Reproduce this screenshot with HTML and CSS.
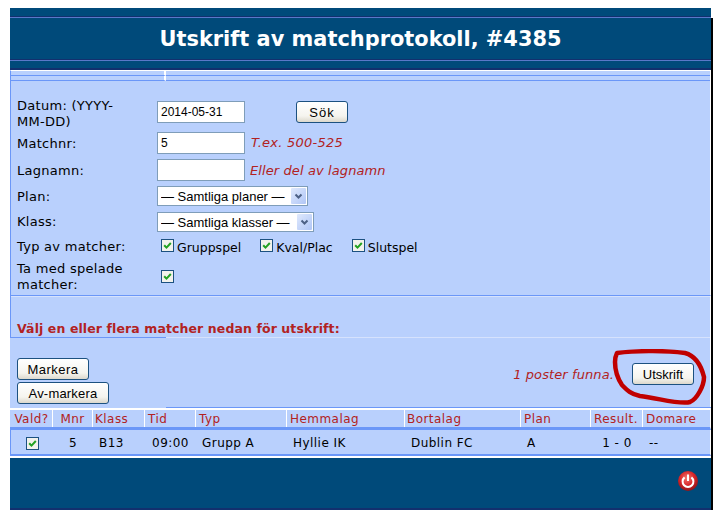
FILE: index.html
```html
<!DOCTYPE html>
<html lang="sv">
<head>
<meta charset="utf-8">
<title>Utskrift av matchprotokoll</title>
<link rel="stylesheet" href="styles.css">
</head>
<body>
<div class="app">
  <header class="head">
    <div class="head-top"></div>
    <h1 class="head-title">Utskrift av matchprotokoll, #4385</h1>
    <div class="head-bottom"></div>
  </header>
  <div class="strips">
    <div class="strip"><i class="cell-a"></i><i class="cell-b"></i></div>
    <div class="strip"><i class="cell-a"></i><i class="cell-b"></i></div>
  </div>
  <form class="form">
    <div class="row row-date">
      <label>Datum: (YYYY-MM-DD)</label>
      <div class="field"><input class="text" type="text" value="2014-05-31"><button class="btn btn-search" type="button">Sök</button></div>
    </div>
    <div class="row row-num">
      <label>Matchnr:</label>
      <div class="field"><input class="text" type="text" value="5"><span class="hint hint-a">T.ex. 500-525</span></div>
    </div>
    <div class="row row-team">
      <label>Lagnamn:</label>
      <div class="field"><input class="text" type="text"><span class="hint">Eller del av lagnamn</span></div>
    </div>
    <div class="row row-sel">
      <label>Plan:</label>
      <div class="field"><select class="sel sel-plan"><option>— Samtliga planer —</option></select></div>
    </div>
    <div class="row row-sel row-klass">
      <label>Klass:</label>
      <div class="field"><select class="sel sel-klass"><option>— Samtliga klasser —</option></select></div>
    </div>
    <div class="row row-type">
      <label>Typ av matcher:</label>
      <div class="field checks">
        <span class="check"><input class="cb" type="checkbox" checked>Gruppspel</span>
        <span class="check"><input class="cb" type="checkbox" checked>Kval/Plac</span>
        <span class="check"><input class="cb" type="checkbox" checked>Slutspel</span>
      </div>
    </div>
    <div class="row row-played">
      <label>Ta med spelade matcher:</label>
      <div class="field checks"><input class="cb" type="checkbox" checked></div>
    </div>
  </form>
  <h2 class="choose">Välj en eller flera matcher nedan för utskrift:</h2>
  <div class="actions">
    <div class="actions-left">
      <button class="btn btn-mark" type="button">Markera</button>
      <button class="btn btn-unmark" type="button">Av-markera</button>
    </div>
    <div class="actions-right">
      <span class="found">1 poster funna.</span>
      <button class="btn btn-print" type="button">Utskrift</button>
    </div>
  </div>
  <div class="grid">
    <div class="grid-row grid-head">
      <div class="c-center">Vald?</div><div class="c-center">Mnr</div><div class="c-klass">Klass</div><div>Tid</div><div>Typ</div><div>Hemmalag</div><div class="c-away">Bortalag</div><div>Plan</div><div>Result.</div><div>Domare</div>
    </div>
    <div class="grid-row grid-data">
      <div class="c-center"><input class="cb" type="checkbox" checked></div><div class="c-center">5</div><div>B13</div><div class="c-center">09:00</div><div>Grupp A</div><div>Hyllie IK</div><div>Dublin FC</div><div>A</div><div class="c-center">1 - 0</div><div>--</div>
    </div>
  </div>
  <footer class="foot">
    <svg class="power" width="22" height="22" viewBox="0 0 22 22" aria-label="Logga ut">
      <defs>
        <radialGradient id="pw" cx="45%" cy="35%" r="65%">
          <stop offset="0" stop-color="#f47a72"/>
          <stop offset=".55" stop-color="#d8262a"/>
          <stop offset="1" stop-color="#8f1418"/>
        </radialGradient>
      </defs>
      <circle cx="11" cy="11" r="10" fill="url(#pw)"/>
      <path d="M7.6 7.4a5.4 5.4 0 1 0 6.8 0" fill="none" stroke="#fff" stroke-width="2"/>
      <path d="M11 4.5v6.5" fill="none" stroke="#fff" stroke-width="2"/>
    </svg>
  </footer>
  <svg class="scribble" width="110" height="70" viewBox="0 0 110 70" aria-hidden="true">
    <path d="M9 4C25 2 55 1 77 4C88 7 93 16 96 28C96 37 89 50 82 53C72 56 50 49 32 47C22 45 18 40 14 36C10 30 7 22 7 13C7 9 8 6 9 4Z" fill="none" stroke="#c00000" stroke-width="4.5" stroke-linejoin="round"/>
  </svg>
</div>
</body>
</html>
```
FILE: styles.css
```css
* { box-sizing: border-box; }
html, body { background: #fff; }
body {
  margin: 8px 0 0 10px;
  font-family: "DejaVu Sans", Verdana, sans-serif;
  font-size: 12px;
  color: #000;
  overflow: hidden;
}
.app {
  position: relative;
  width: 701px;
  height: 502px;
  display: flex;
  flex-direction: column;
  background: #b9d0fd;
}
.app::before {
  content: "";
  position: absolute;
  left: 8px;
  top: 10px;
  right: -5px;
  bottom: -5px;
  background: #bbb;
  z-index: -1;
}
.app::after {
  content: "";
  position: absolute;
  top: 10px;
  right: -2px;
  bottom: 0;
  width: 2px;
  background: #000;
}

/* header */
.head { background: #004a7a; height: 62px; display: flex; flex-direction: column; flex: none; }
.head-top { height: 10px; border-bottom: 1px solid #5a78c8; box-shadow: inset 0 -1px 0 #12306e; }
.head-title {
  margin: 0;
  height: 42px;
  line-height: 42px;
  text-align: center;
  color: #fff;
  font-size: 20.9px;
  font-weight: 700;
  box-shadow: inset 0 -1px 0 #12306e;
}
.head-bottom { height: 10px; border-top: 1px solid #5a78c8; border-bottom: 2px solid #12306e; }

/* strips */
.strips {
  height: 11px;
  flex: none;
  border-left: 1px solid #6b97f8;
  border-right: 1px solid #fff;
  border-top: 1px solid #fff;
  display: flex;
  flex-direction: column;
}
.strip { display: flex; height: 5px; }
.cell-a { display: block; width: 155px; height: 100%; border-bottom: 1px solid #6b97f8; border-right: 2px solid #fff; }
.cell-b { display: block; flex: 1; height: 100%; border-bottom: 1px solid #6b97f8; }

/* form */
.form {
  padding: 15px 0 2px 6px;
  height: 215px;
  border-left: 1px solid #6b97f8;
  border-right: 1px solid #fff;
  border-bottom: 1px solid #6b97f8;
  box-shadow: 0 1px 0 #d6e2fd;
  flex: none;
}
.row { display: grid; grid-template-columns: 140px 1fr; align-items: center; line-height: 16px; font-size: 13px; letter-spacing: .28px; }
.row label { padding: 2px 18px 0 0; }
.row-date { height: 32px; }
.row-date .field { margin-top: -2px; }
.row-num { height: 29px; }
.row-team { height: 26px; }
.row-sel { height: 26px; }
.row-type { height: 24px; }
.row-played { height: 34px; }
.row-klass label { padding-top: 0; }
.row-type label { padding-top: 0; }
.field { display: flex; align-items: center; }
.text {
  width: 88px;
  height: 22px;
  padding: 0 3px;
  border: 1px solid #7f9db9;
  background: #fff;
  font: 12px "Liberation Sans", Arial, sans-serif;
  color: #000;
  border-radius: 0;
  outline: 0;
}
.hint { margin-left: 5px; padding-top: 1px; color: #b22222; font-style: italic; letter-spacing: .1px; }
.hint-a { margin-left: 6px; letter-spacing: .25px; }
.sel {
  appearance: none;
  -webkit-appearance: none;
  height: 20px;
  padding: 0 0 0 3px;
  border: 1px solid #7f9db9;
  border-radius: 0;
  background: #fff url("data:image/svg+xml,%3Csvg xmlns='http://www.w3.org/2000/svg' width='15' height='16'%3E%3Cdefs%3E%3ClinearGradient id='g' x1='0' y1='0' x2='1' y2='1'%3E%3Cstop offset='0' stop-color='%23dfe9fd'/%3E%3Cstop offset='1' stop-color='%23b0c6f6'/%3E%3C/linearGradient%3E%3C/defs%3E%3Crect width='15' height='16' rx='1' fill='url(%23g)'/%3E%3Cpath d='M4.5 6.5l3 3 3-3' fill='none' stroke='%234d6185' stroke-width='2'/%3E%3C/svg%3E") no-repeat right 1px center;
  font: 13px "Liberation Sans", Arial, sans-serif;
  color: #000;
}
.sel-plan { width: 151px; }
.sel-klass { width: 157px; }
.checks { padding-left: 4px; gap: 19px; }
.check { display: flex; align-items: center; padding-top: 1px; font-size: 12.5px; letter-spacing: 0; }
.cb {
  appearance: none;
  -webkit-appearance: none;
  width: 13px;
  height: 13px;
  margin: 0;
  flex: none;
  border: 1px solid #1c5180;
  border-radius: 0;
  background: #f2f2ec url("data:image/svg+xml,%3Csvg xmlns='http://www.w3.org/2000/svg' width='11' height='11'%3E%3Cpath d='M2.2 5.2l2.3 2.4 4.3-4.6' fill='none' stroke='%2321a121' stroke-width='2'/%3E%3C/svg%3E") center no-repeat;
}
.check .cb { margin: -4px 3px 0 0; }

/* choose */
.choose {
  margin: 0;
  height: 42px;
  padding: 25px 0 0 6px;
  font-size: 12.5px;
  line-height: 16px;
  font-weight: 700;
  color: #b22222;
  letter-spacing: .1px;
  border-left: 1px solid #6b97f8;
  border-right: 1px solid #fff;
  flex: none;
  background: linear-gradient(to right, #6b97f8 155px, #d6e2fd 155px) left bottom / 100% 1px no-repeat;
}

/* actions */
.actions {
  height: 69px;
  flex: none;
  display: flex;
  justify-content: space-between;
  padding: 20px 16px 0 7px;
  border-right: 1px solid #fff;
}
.actions-left { display: flex; flex-direction: column; align-items: flex-start; gap: 2px; }
.actions-right { display: flex; align-items: center; height: 32px; }
.btn {
  height: 22px;
  padding: 0;
  border: 1px solid #1c5180;
  border-radius: 3px;
  background: linear-gradient(#fff, #f5f4ee 70%, #dcd8cc);
  font: 13px "Liberation Sans", Arial, sans-serif;
  color: #000;
}
.btn-search { width: 52px; margin-left: 51px; letter-spacing: 1px; }
.btn-mark { width: 72px; letter-spacing: .5px; }
.btn-unmark { width: 92px; letter-spacing: .2px; }
.btn-print { width: 62px; }
.found { color: #b22222; font-size: 13px; font-style: italic; letter-spacing: .1px; margin-right: 18px; }

/* grid */
.grid {
  flex: none;
  padding-top: 1px;
  background: linear-gradient(to right, #b9d0fd 156px, #6b97f8 156px) left top / 100% 1px no-repeat;
}
.grid-row {
  display: grid;
  grid-template-columns: 41px 40px 52px 51px 91px 118px 116px 70px 52px 68px;
  align-items: center;
}
.grid-head {
  height: 22px;
  color: #b22222;
  letter-spacing: .45px;
  border-top: 2px solid #fff;
  border-bottom: 3px solid #6b97f8;
  padding-left: 1px;
  border-right: 1px solid #fff;
}
.grid-head > div { height: 100%; padding: 2px 0 0 3px; border-left: 1px solid #fff; line-height: 15px; }
.grid-head > div:first-child { border-left: 0; }
.grid-head > .c-center { padding-left: 0; text-align: center; }
.grid-head > .c-klass, .grid-head > .c-away { padding-left: 2px; }
.grid-data {
  height: 26px;
  padding: 0 0 0 1px;
  letter-spacing: .45px;
  border-left: 1px solid #6b97f8;
  border-right: 1px solid #fff;
  border-bottom: 2px solid #6b97f8;
}
.grid-data > div { padding: 2px 0 0 6px; }
.grid-data > .c-center { padding-left: 0; text-align: center; }
.grid-data .cb { display: block; margin: 0 auto; }

/* footer */
.foot {
  flex: 1;
  position: relative;
  background: #004a7a;
  border-top: 2px solid #fff;
  border-bottom: 2px solid #12306e;
  display: flex;
  justify-content: flex-end;
  align-items: flex-start;
  padding: 12px 12px 0 0;
}
.power { display: block; }
.scribble { position: absolute; left: 598px; top: 341px; }
```
